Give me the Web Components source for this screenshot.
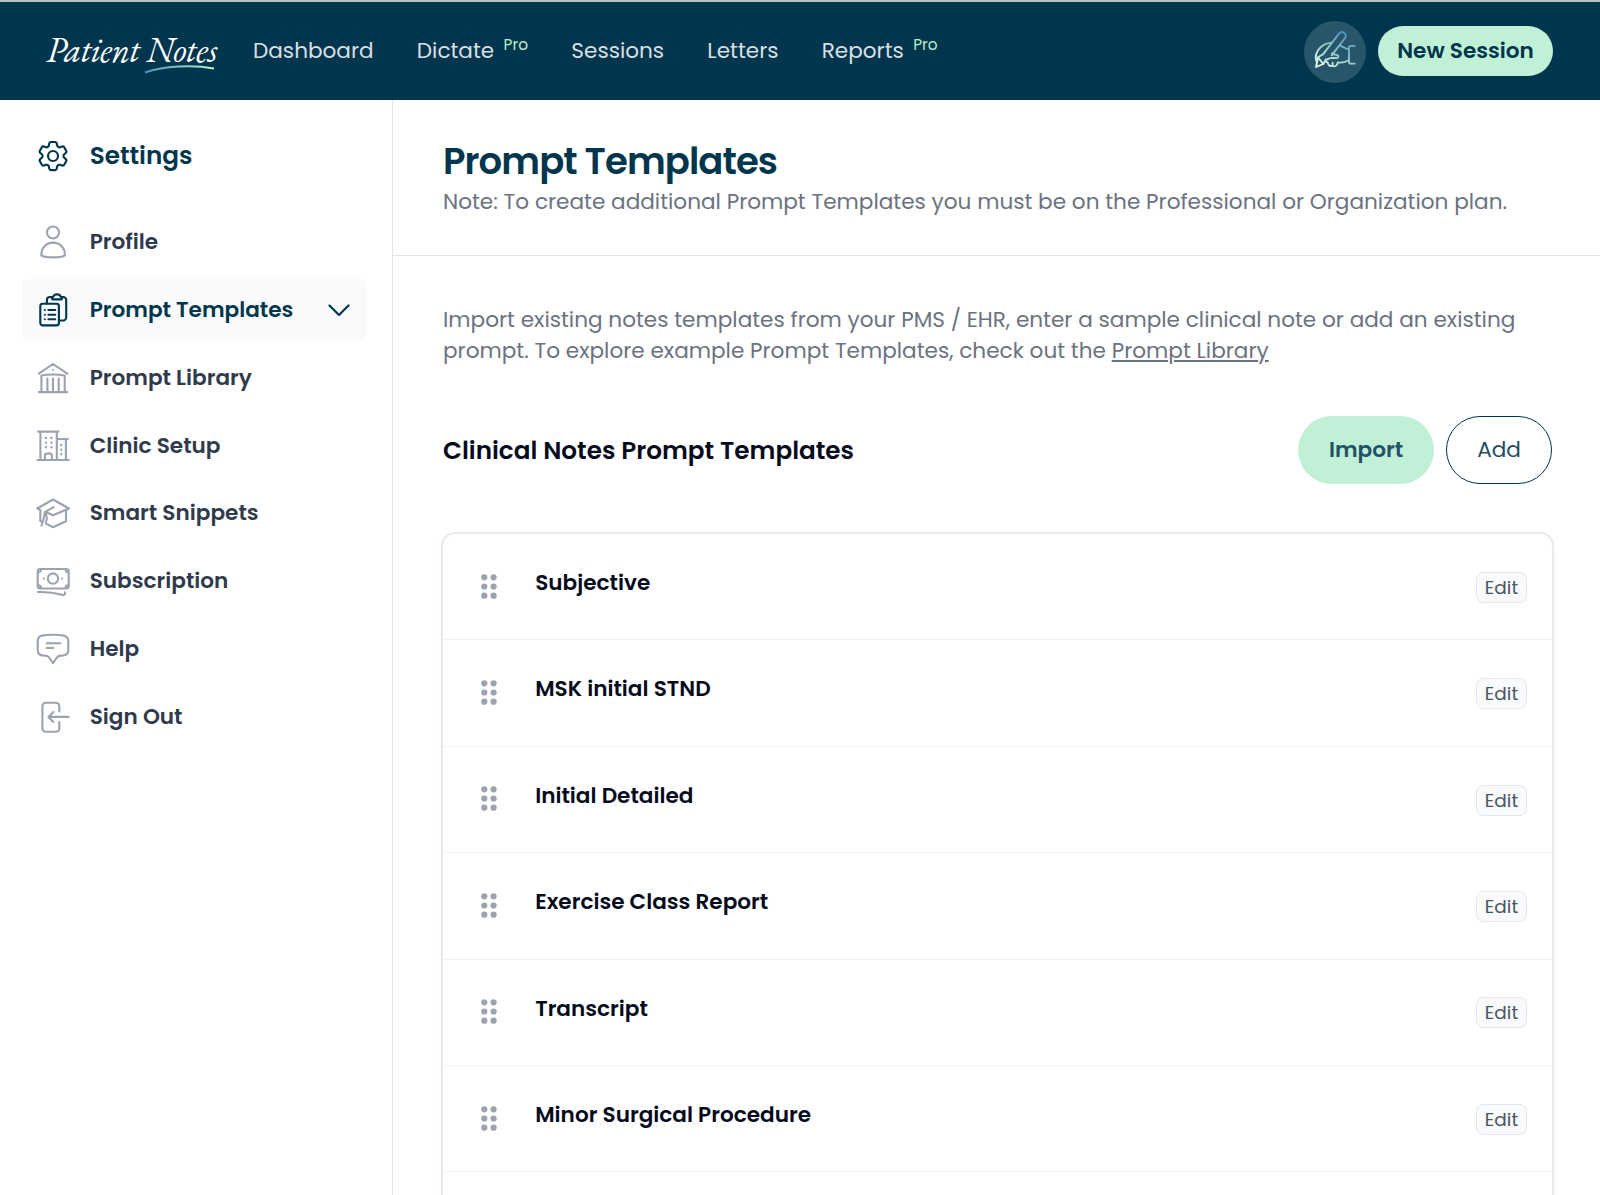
<!DOCTYPE html>
<html lang="en">
<head>
<meta charset="utf-8">
<title>Prompt Templates</title>
<style>
html, body { margin: 0; height: 100%; overflow: hidden; background: #fff; }
body { font-family: Poppins, Inter, "Open Sans", sans-serif; font-size: 21.6px; }
</style>
</head>
<body>
<notes-app></notes-app>
<script>
'use strict';
(function () {
    // stroke icons, all drawn on a 34x34 grid
    const ICONS = {
        gear: '<g transform="translate(-1.7 -1.7) scale(1.56)" stroke-width="1.4"><path d="M9.594 3.94c.09-.542.56-.94 1.11-.94h2.593c.55 0 1.02.398 1.11.94l.213 1.281c.063.374.313.686.645.87.074.04.147.083.22.127.325.196.72.257 1.075.124l1.217-.456a1.125 1.125 0 0 1 1.37.49l1.296 2.247a1.125 1.125 0 0 1-.26 1.431l-1.003.827c-.293.241-.438.613-.43.992a7.723 7.723 0 0 1 0 .255c-.008.378.137.75.43.991l1.004.827c.424.35.534.955.26 1.43l-1.298 2.247a1.125 1.125 0 0 1-1.369.491l-1.217-.456c-.355-.133-.75-.072-1.076.124a6.47 6.47 0 0 1-.22.128c-.331.183-.581.495-.644.869l-.213 1.281c-.09.543-.56.94-1.11.94h-2.594c-.55 0-1.019-.398-1.11-.94l-.213-1.281c-.062-.374-.312-.686-.644-.87a6.52 6.52 0 0 1-.22-.127c-.325-.196-.72-.257-1.076-.124l-1.217.456a1.125 1.125 0 0 1-1.369-.49l-1.297-2.247a1.125 1.125 0 0 1 .26-1.431l1.004-.827c.292-.24.437-.613.43-.991a6.932 6.932 0 0 1 0-.255c.007-.38-.138-.751-.43-.992l-1.004-.827a1.125 1.125 0 0 1-.26-1.43l1.297-2.247a1.125 1.125 0 0 1 1.37-.491l1.216.456c.356.133.751.072 1.076-.124.072-.044.146-.086.22-.128.332-.183.582-.495.644-.869l.214-1.28Z"/><circle cx="12" cy="12" r="3.2"/></g>',
        profile: '<circle cx="17" cy="7.5" r="6"/><path d="M5.3 30.3C5.3 22.5 10.5 17.6 17 17.6S28.9 22.5 28.9 30.3C25 33 9 33 5.3 30.3z"/>',
        templates: '<rect x="4.3" y="10.8" width="18.6" height="21.6" rx="2.4"/><path d="M10.9 10.5V7a3 3 0 0 1 3-3h2M26 4h1.2a3 3 0 0 1 3 3v17.5a3 3 0 0 1-3 3h-4M16.5 6.4c-1-1-.6-2.6 1-2.8.6-3 6.4-3 7 0 1.6.2 2 1.8 1 2.8z"/><path d="M8.8 17h.01M8.8 21.7h.01M8.8 26.3h.01M12.4 17h6.8M12.4 21.7h6.8M12.4 26.3h6.8"/>',
        library: '<path d="M2.8 12.6 17 3l14.3 9.6M5.4 30.5V14.6c6-1.4 17.2-1.4 23.3 0v15.9M2.8 31.1h28.4M11.4 17.5v13M17 17.5v13M22.7 17.5v13M17 8.8h.01"/>',
        clinic: '<path d="M2 2.6h20.5M4.4 3v27.6M20.8 3v27.6M1.6 31h31.2M21 10h10.8M29.9 10v20.6M8.9 30.6v-4c0-3 7-3 7 0v4"/><path stroke-width="2.4" d="M10 9h.01M15.4 9h.01M10 13.6h.01M15.4 13.6h.01M10 18.3h.01M15.4 18.3h.01M25.2 16h.01M25.2 20.6h.01M25.2 25.3h.01"/>',
        snippets: '<path d="M4.2 13.9 1.2 12.5 17 3.5l16 9-16 6.7-6-2.7M30 14.5v10.7l-13 6-7-3.6M4.3 14.5V25l1.8 1M17.7 11.2l-8.8 5c-1 6-1.8 9.8-3.4 13.3M8.9 16.4c2 3 2.2 7 1 9.8"/>',
        subscription: '<rect x="1.7" y="5" width="31" height="19.5" rx="2.5"/><circle cx="17" cy="14.6" r="5.2"/><path d="M7.7 14.6h.01M26.2 14.6h.01M2.3 8.2c1.8 0 2.6-1 2.6-2.6M32.2 8.2c-1.8 0-2.6-1-2.6-2.6M2.3 21.3c1.8 0 2.6 1 2.6 2.6M32.2 21.3c-1.8 0-2.6 1-2.6 2.6M2 28c13-.4 18 1 25 3 1.8.3 2-.8 2-2.6"/>',
        help: '<path d="M17 2.8c-5.2 0-8 .2-10.5.8-3.2.7-4.8 2.7-4.8 5.6v8.5c0 3.7 2.4 5.5 5.3 5.8 2.4.2 4.5-.1 5.8 1.6 1.2 1.6 2.8 4 4.2 6 1.4-2 3-4.4 4.2-6 1.3-1.7 3.4-1.4 5.8-1.6 2.9-.3 5.3-2.1 5.3-5.8V9.2c0-2.9-1.6-4.9-4.8-5.6C25 3 22.2 2.8 17 2.8zM10.6 11.3h13.8M10.6 16h6.7"/>',
        signout: '<path d="M23.3 11.5v-5c0-2.6-1.2-3.7-3.7-3.7H10C7.5 2.8 6.4 4 6.4 6.5v21.6c0 2.5 1.1 3.7 3.6 3.7h9.6c2.5 0 3.7-1.2 3.7-3.7v-6M32.6 16.9h-20M17.4 11.9l-5 5 5 5"/>'
    };

    class NoteIcon extends HTMLElement {
        connectedCallback() {
            this.attachShadow({mode: 'open'}).innerHTML = `
<style>
:host { display: block; flex: none; width: 34px; height: 34px; }
svg { display: block; fill: none; stroke: currentColor; stroke-width: 2.1; stroke-linecap: round; stroke-linejoin: round; }
</style>
<svg width="34" height="34" viewBox="0 0 34 34">${ICONS[this.getAttribute('name')]}</svg>`;
        }
    }

    class NavLink extends HTMLElement {
        connectedCallback() {
            const badge = this.hasAttribute('pro') ? '<sup>Pro</sup>' : '';
            this.attachShadow({mode: 'open'}).innerHTML = `
<style>
:host { display: flex; align-items: center; color: #d9dfe3; line-height: 30px; white-space: nowrap; }
sup { margin: 0 0 12px 9.4px; font-size: 15.4px; line-height: 18px; color: #b5ecc9; }
</style>
<span><slot></slot></span>${badge}`;
        }
    }

    class TopBar extends HTMLElement {
        connectedCallback() {
            this.attachShadow({mode: 'open'}).innerHTML = `
<style>
:host { display: flex; align-items: center; box-sizing: border-box; height: 100px; padding: 0 47px 0 46px; border-top: 2px solid #b9bfb9; background: #00364d; flex: none; }
.logo { width: 170px; padding-top: 4px; color: #fff; font: italic 35.5px/36px "EB Garamond", "Liberation Serif", serif; letter-spacing: -.5px; white-space: nowrap; }
.logo svg { display: block; margin: -3px 0 0 98px; }
nav { display: flex; gap: 43.2px; margin-left: 37px; flex: 1; }
.pen { width: 62px; height: 62px; margin: 2px 12px 0 0; border-radius: 50%; background: #27566a; }
.pen svg { display: block; fill: none; stroke-width: 5.5; stroke-linecap: round; stroke-linejoin: round; }
button { width: 175px; height: 50px; padding: 0; border: 0; border-radius: 25px; background: #c0f0d6; color: #00364d; font: inherit; font-weight: 600; line-height: 30px; white-space: nowrap; }
</style>
<div class="logo">Patient Notes<svg width="72" height="9" viewBox="0 0 72 9"><defs><linearGradient id="u"><stop stop-color="#4f93bd"/><stop offset="1" stop-color="#b9f0cd"/></linearGradient></defs><path d="M1 7.5C20 1 48-.5 70 3.5" fill="none" stroke="url(#u)" stroke-width="2"/></svg></div>
<nav>
    <nav-link>Dashboard</nav-link>
    <nav-link pro>Dictate</nav-link>
    <nav-link>Sessions</nav-link>
    <nav-link>Letters</nav-link>
    <nav-link pro>Reports</nav-link>
</nav>
<div class="pen"><svg width="62" height="62" viewBox="74 64 186 186"><defs><linearGradient id="p" gradientUnits="userSpaceOnUse" x1="190" y1="95" x2="120" y2="200"><stop stop-color="#4f93bd"/><stop offset=".6" stop-color="#9fd6d0"/><stop offset="1" stop-color="#e6fff0"/></linearGradient></defs><g stroke="url(#p)"><path d="M131 164 179 102c9-11 27 1 18 13l-40 52M110 202l6-29 15-9M110 202l22-9 8-14M116 173l16 20M112 186c-9-20 6-52 44-57"/><path d="M158 161c4 5 10 3 16 5 6 3 3 9-3 9h-17c-14 5-22 7-10 13M184 139c10 3 17 10 25 10M226 139h-13c-3 0-4 2-4 5v43c0 3 2 5 5 5h12M145 188c2 10 8 13 14 10 6 4 15 2 16-10 12 2 24 0 33-6M160 189v9"/></g></svg></div>
<button>New Session</button>`;
        }
    }

    class SideItem extends HTMLElement {
        connectedCallback() {
            const chevron = this.hasAttribute('active')
                ? '<svg width="22" height="13" viewBox="0 0 22 13"><path d="M1.5 1.5l9.5 9.5 9.5-9.5"/></svg>' : '';
            this.attachShadow({mode: 'open'}).innerHTML = `
<style>
:host { display: flex; align-items: center; box-sizing: border-box; height: 61.2px; padding: 0 17px 0 14px; border-radius: 8px; color: #2f3b4d; font-weight: 600; white-space: nowrap; }
:host([active]) { background: #f9fafb; color: #00364d; }
:host([heading]) { color: #00364d; font-size: 24.7px; }
note-icon { color: #9ca3af; margin-right: 20px; }
:host([active]) note-icon, :host([heading]) note-icon { color: #00364d; }
.label { flex: 1; line-height: 30px; }
:host([heading]) .label { padding-top: 1px; }
svg { margin-top: 1.5px; fill: none; stroke: currentColor; stroke-width: 2.2; stroke-linecap: round; stroke-linejoin: round; }
</style>
<note-icon name="${this.getAttribute('icon')}"></note-icon>
<div class="label"><slot></slot></div>${chevron}`;
        }
    }

    class SideBar extends HTMLElement {
        connectedCallback() {
            this.attachShadow({mode: 'open'}).innerHTML = `
<style>
:host { display: flex; flex-direction: column; gap: 6.65px; box-sizing: border-box; width: 393px; flex: none; padding: 25.2px 25px 0 21.7px; border-right: 1px solid #e1e4e9; }
side-item[heading] { margin-bottom: 18.5px; }
</style>
<side-item heading icon="gear">Settings</side-item>
<side-item icon="profile">Profile</side-item>
<side-item active icon="templates">Prompt Templates</side-item>
<side-item icon="library">Prompt Library</side-item>
<side-item icon="clinic">Clinic Setup</side-item>
<side-item icon="snippets">Smart Snippets</side-item>
<side-item icon="subscription">Subscription</side-item>
<side-item icon="help">Help</side-item>
<side-item icon="signout">Sign Out</side-item>`;
        }
    }

    class PillButton extends HTMLElement {
        connectedCallback() {
            this.attachShadow({mode: 'open'}).innerHTML = `
<style>
:host { display: block; }
button { box-sizing: border-box; width: 106px; height: 68px; padding: 0; border: 1.5px solid #00364d; border-radius: 34px; background: #fff; color: #1f4e63; font: inherit; line-height: 30px; white-space: nowrap; }
:host([primary]) button { width: 136px; border: 0; background: #c0f0d6; color: #235166; font-weight: 600; }
</style>
<button><slot></slot></button>`;
        }
    }

    class TemplateRow extends HTMLElement {
        connectedCallback() {
            let dots = '';
            for (const y of [3.3, 12.5, 21.7]) {
                dots += `<circle cx="3.3" cy="${y}" r="3.1"/><circle cx="12.6" cy="${y}" r="3.1"/>`;
            }
            this.attachShadow({mode: 'open'}).innerHTML = `
<style>
:host { display: flex; align-items: center; box-sizing: border-box; height: 106.4px; padding: 0 25px 0 38px; border-bottom: 1px solid #f1f2f5; }
svg { flex: none; margin-bottom: 1px; fill: #9ca3af; }
.name { flex: 1; margin: 0 0 7.4px 38.2px; line-height: 30px; font-weight: 600; color: #050b1c; white-space: nowrap; }
button { box-sizing: border-box; width: 51px; height: 31px; margin-top: 1.4px; padding: 0; border: 1px solid #e3e6ea; border-radius: 7.5px; background: #f9fafb; color: #4b5563; font: inherit; font-size: 18.5px; line-height: 29px; }
</style>
<svg width="16" height="25">${dots}</svg>
<div class="name"><slot></slot></div>
<button>Edit</button>`;
        }
    }

    class TemplatesPage extends HTMLElement {
        connectedCallback() {
            this.attachShadow({mode: 'open'}).innerHTML = `
<style>
:host { display: flex; flex-direction: column; flex: 1; min-width: 0; }
header { box-sizing: border-box; height: 156px; padding: 41px 50px 0; border-bottom: 1px solid #e1e4e9; flex: none; }
h1 { margin: 0 0 5.7px; font-size: 37px; line-height: 40px; font-weight: 600; letter-spacing: -.025em; color: #00364d; white-space: nowrap; }
p { margin: 0; line-height: 30.8px; color: #6b7280; white-space: nowrap; }
section { display: flex; flex-direction: column; padding: 49.4px 46px 0 50px; flex: 1; min-height: 0; }
.bar { display: flex; align-items: center; gap: 12px; height: 68px; margin: 49px 2px 48px 0; flex: none; }
h2 { flex: 1; margin: 0; padding-top: 2px; font-size: 24.7px; line-height: 30px; font-weight: 600; color: #050b1c; white-space: nowrap; }
.card { box-sizing: border-box; height: 760px; margin-left: -2px; flex: none; border: 2px solid #e8eaee; border-radius: 14px; box-shadow: 0 2px 4px rgba(0,0,0,.04); }
</style>
<header>
    <h1>Prompt Templates</h1>
    <p>Note: To create additional Prompt Templates you must be on the Professional or Organization plan.</p>
</header>
<section>
    <p>Import existing notes templates from your PMS / EHR, enter a sample clinical note or add an existing<br>prompt. To explore example Prompt Templates, check out the <u>Prompt Library</u></p>
    <div class="bar">
        <h2>Clinical Notes Prompt Templates</h2>
        <pill-button primary>Import</pill-button>
        <pill-button>Add</pill-button>
    </div>
    <div class="card">
        <template-row>Subjective</template-row>
        <template-row>MSK initial STND</template-row>
        <template-row>Initial Detailed</template-row>
        <template-row>Exercise Class Report</template-row>
        <template-row>Transcript</template-row>
        <template-row>Minor Surgical Procedure</template-row>
    </div>
</section>`;
        }
    }

    class NotesApp extends HTMLElement {
        connectedCallback() {
            this.attachShadow({mode: 'open'}).innerHTML = `
<style>
:host { display: flex; flex-direction: column; height: 1195px; overflow: hidden; }
main { display: flex; flex: 1; min-height: 0; }
</style>
<top-bar></top-bar>
<main>
    <side-bar></side-bar>
    <templates-page></templates-page>
</main>`;
        }
    }

    customElements.define('note-icon', NoteIcon);
    customElements.define('nav-link', NavLink);
    customElements.define('top-bar', TopBar);
    customElements.define('side-item', SideItem);
    customElements.define('side-bar', SideBar);
    customElements.define('pill-button', PillButton);
    customElements.define('template-row', TemplateRow);
    customElements.define('templates-page', TemplatesPage);
    customElements.define('notes-app', NotesApp);
})();
</script>
</body>
</html>
